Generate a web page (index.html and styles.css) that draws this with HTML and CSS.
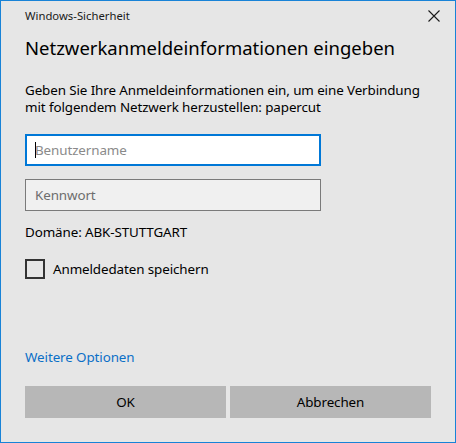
FILE: index.html
```html
<!DOCTYPE html>
<html lang="de">
<head>
<meta charset="utf-8">
<title>Windows-Sicherheit</title>
<link rel="stylesheet" href="styles.css">
</head>
<body>
<div class="window">
  <div class="titlebar">
    <span class="app-title">Windows-Sicherheit</span>
    <svg class="close" width="12" height="12" viewBox="0 0 12 12"><path d="M0.5 0.5 L11.5 11.5 M11.5 0.5 L0.5 11.5" stroke="#1a1a1a" stroke-width="1.1" fill="none"/></svg>
  </div>
  <h1 class="heading">Netzwerkanmeldeinformationen eingeben</h1>
  <p class="intro">Geben Sie Ihre Anmeldeinformationen ein, um eine Verbindung mit folgendem Netzwerk herzustellen: papercut</p>
  <div class="field field-focus"><span class="caret"></span><span class="placeholder">Benutzername</span></div>
  <div class="field field-plain"><span class="placeholder dark">Kennwort</span></div>
  <p class="domain">Domäne: ABK-STUTTGART</p>
  <label class="check"><span class="box"></span><span class="check-label">Anmeldedaten speichern</span></label>
  <a class="more" href="#">Weitere Optionen</a>
  <div class="buttons">
    <button class="btn">OK</button>
    <button class="btn">Abbrechen</button>
  </div>
</div>
</body>
</html>
```
FILE: styles.css
```css
html, body {
  margin: 0;
  padding: 0;
  background: #e6e6e6;
}
.window {
  width: 456px;
  height: 443px;
  box-sizing: border-box;
  border: 1px solid #1883d7;
  background: #e6e6e6;
  padding: 0 24px;
  font-family: "Noto Sans", "Open Sans", sans-serif;
  color: #000;
  display: flex;
  flex-direction: column;
}
.titlebar {
  display: flex;
  justify-content: space-between;
  align-items: center;
  height: 32px;
  margin-right: -9px;
}
.app-title {
  font-size: 11.3px;
  color: #1a1a1a;
  margin-top: -3px;
}
.close {
  margin-top: -3px;
}
.heading {
  margin: 0;
  font-weight: normal;
  font-size: 18.5px;
  line-height: 26px;
  margin-top: 2px;
}
.intro {
  margin: 0;
  margin-top: 21px;
  font-size: 13.4px;
  letter-spacing: -0.1px;
  line-height: 17px;
}
.field {
  box-sizing: border-box;
  width: 296px;
  height: 32px;
  display: flex;
  align-items: center;
  padding-left: 9px;
  font-size: 13.4px;
  letter-spacing: -0.1px;
}
.field-focus {
  margin-top: 18px;
  background: #ffffff;
  border: 2px solid #0078d7;
  padding-left: 8px;
}
.field-plain {
  margin-top: 13px;
  background: #f0f0f0;
  border: 1px solid #7a7a7a;
}
.caret {
  width: 1px;
  height: 16px;
  background: #000;
  margin-right: -1px;
}
.placeholder {
  color: #8a8a8a;
}
.placeholder.dark {
  color: #6d6d6d;
}
.domain {
  margin: 0;
  margin-top: 11px;
  font-size: 13.4px;
  letter-spacing: -0.1px;
  line-height: 20px;
}
.check {
  display: flex;
  align-items: center;
  margin-top: 17px;
}
.box {
  box-sizing: border-box;
  width: 20px;
  height: 20px;
  border: 2px solid #333333;
  margin-right: 8px;
}
.check-label {
  font-size: 13.4px;
  letter-spacing: -0.1px;
}
.more {
  margin-top: 68px;
  font-size: 13.4px;
  letter-spacing: -0.1px;
  color: #0b6fc7;
  text-decoration: none;
  align-self: flex-start;
  line-height: 20px;
}
.buttons {
  display: flex;
  gap: 4px;
  margin-top: 19px;
}
.btn {
  flex: 1;
  height: 32px;
  border: none;
  background: #b7b7b7;
  font-family: "Noto Sans", "Open Sans", sans-serif;
  font-size: 13.4px;
  letter-spacing: -0.1px;
  color: #000;
  padding: 0;
}
```
